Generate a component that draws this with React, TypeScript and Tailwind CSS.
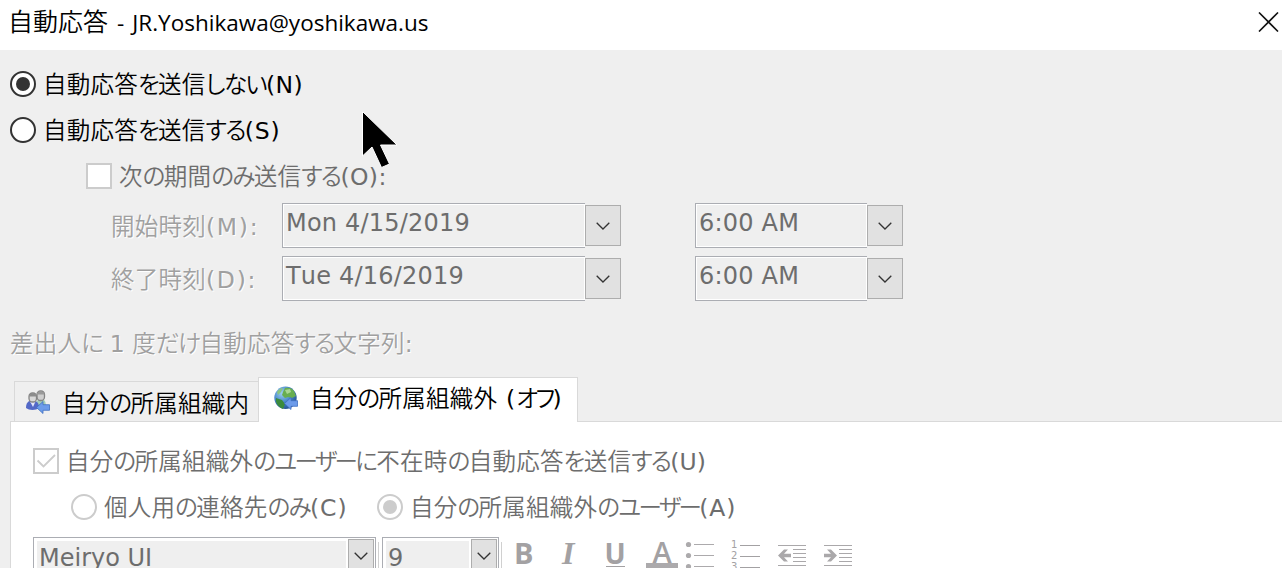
import type { ReactNode } from "react";
import clsx from "clsx";

const uiFont =
  "font-['DejaVu_Sans','Noto_Sans_CJK_JP',sans-serif] [font-feature-settings:'palt'] whitespace-nowrap";

// 文字種ごとに字間と太さを変える
function splitScripts(text: string) {
  return text.match(/[\x20-\x7e]+|[ぁ-ゟ]+|[゠-ヿ]+|[一-鿿]+/g) ?? [];
}

function Label({
  children,
  className,
  latin = "tracking-[0.4px]",
}: {
  children: string;
  className?: string;
  latin?: string;
}) {
  return (
    <span className={clsx("relative top-px inline-block text-[23.5px] leading-8", className)}>
      {splitScripts(children).map((part, i) => (
        <span
          key={i}
          className={clsx(
            /^[\x20-\x7e]/.test(part) && latin,
            /^[ぁ-ゟ]/.test(part) && "font-[350] tracking-[-1.6px]",
            /^[゠-ヿ]/.test(part) && "font-[350] tracking-[-2.6px]",
            /^[一-鿿]/.test(part) && "font-[350] tracking-[0.25px]"
          )}
        >
          {part}
        </span>
      ))}
    </span>
  );
}

function Radio({ checked, disabled }: { checked?: boolean; disabled?: boolean }) {
  return (
    <span
      className={clsx(
        "flex size-[26px] shrink-0 items-center justify-center rounded-full border-2 bg-white",
        disabled ? "border-[#cccccc]" : "border-[#333333]"
      )}
    >
      {checked && (
        <span
          className={clsx("size-3.5 rounded-full", disabled ? "bg-[#cccccc]" : "bg-[#333333]")}
        />
      )}
    </span>
  );
}

function Checkbox({ checked }: { checked?: boolean }) {
  return (
    <span className="flex size-[26px] shrink-0 items-center justify-center border-2 border-[#cccccc] bg-white">
      {checked && (
        <svg width="22" height="22" viewBox="0 0 22 22" fill="none" stroke="#cccccc" strokeWidth="1.8">
          <path d="M2.500 10.500 8.500 16.500 20 5" />
        </svg>
      )}
    </span>
  );
}

function Chevron() {
  return (
    <svg width="14" height="8" viewBox="0 0 14 8" fill="none" stroke="#333333" strokeWidth="1.3">
      <path d="M.7.7 7 7 13.3.7" />
    </svg>
  );
}

function Picker({ value, className }: { value: ReactNode; className: string }) {
  return (
    <div className="flex items-center">
      <div
        className={clsx(
          "h-[45px] border border-r-0 border-[#abadb3] bg-[#efefef] pl-[3px] text-2xl leading-[39px] tracking-[0.2px] text-[#6d6d6d] shadow-[inset_0_0_0_1px_#fff] [font-kerning:none]",
          className
        )}
      >
        {value}
      </div>
      <div className="flex h-[41px] w-9 items-center justify-center border border-[#adadad] bg-[#e1e1e1]">
        <Chevron />
      </div>
    </div>
  );
}

function Select({ value, className }: { value: string; className: string }) {
  return (
    <div className={clsx("flex h-[50px] border border-[#abadb3] bg-white p-px", className)}>
      <div className="m-0.5 flex-1 bg-[#efefef] pl-0.5 text-2xl leading-[35px] text-[#6d6d6d]">
        {value}
      </div>
      <div className="flex w-[26px] justify-center border border-[#adadad] bg-[#e1e1e1] pt-3">
        <Chevron />
      </div>
    </div>
  );
}

function BlueArrow() {
  return (
    <path
      d="M10.500 17.500 17 11.500v3.200h6.500v5.600H17v3.200Z"
      fill="#6c9bea"
      stroke="#3f6fc0"
      strokeWidth=".8"
    />
  );
}

function PeopleIcon() {
  return (
    <svg width="24" height="24" viewBox="0 0 24 24">
      <path d="M10 18c0-6 1-9 5-9s5 3 5 9Z" fill="#a3cdb8" />
      <rect x="11" y="1" width="7.500" height="9.500" rx="3.500" fill="#cfcfcf" stroke="#858585" strokeWidth="1.3" />
      <path d="M11 4.500c0-4.500 7.500-4.500 7.500 0Z" fill="#9a9a9a" />
      <path d="M0 18c0-5 2-7.500 6.500-7.500S13 13 13 18c-3 2.500-10 2.500-13 0Z" fill="#5369c7" />
      <path d="m4 11.500 3 5.500 2.500-5.500Z" fill="#e4e6fa" />
      <rect x="3" y="3" width="7.500" height="9" rx="3.500" fill="#d8d8d8" stroke="#858585" strokeWidth="1.3" />
      <path d="M3 6.500c0-4.500 7.500-4.500 7.500 0Z" fill="#8c8c8c" />
      <BlueArrow />
    </svg>
  );
}

function GlobeIcon() {
  return (
    <svg width="26" height="25" viewBox="0 0 26 25">
      <defs>
        <radialGradient id="sea" cx=".35" cy=".3" r=".75">
          <stop offset="0" stopColor="#9fd0f2" />
          <stop offset=".55" stopColor="#4585c8" />
          <stop offset="1" stopColor="#24508f" />
        </radialGradient>
      </defs>
      <circle cx="11.500" cy="11.800" r="11.200" fill="url(#sea)" />
      <path d="M11 2c4-1 7 0 9 3l2 5-4 2-4-1-3 1-3-3 1-3Z" fill="#68ae50" />
      <path d="M3 6c2-3 4-4 6-4L7 6 4 9Z" fill="#8cc57c" />
      <path d="m2 12 6 2 3 4-2 5C5 21 1 18 2 12Z" fill="#3c8b3d" />
      <path d="m11 4 5-1 1 3-4 2Z" fill="#a9d792" />
      <BlueArrow />
    </svg>
  );
}

function BulletList() {
  return (
    <svg width="30" height="30" viewBox="0 0 30 30" fill="#acaaac">
      {[4, 15, 26].map((y) => (
        <g key={y}>
          <circle cx="3.500" cy={y + 0.5} r="2.600" />
          <path d={`M9 ${y}h20v1H9Z`} />
        </g>
      ))}
    </svg>
  );
}

function NumberList() {
  return (
    <svg width="30" height="30" viewBox="0 0 30 30" fill="#a3a1a3">
      {[1, 2, 3].map((n) => (
        <g key={n}>
          <text x="0" y={n * 11 - 3} fontSize="10" fontFamily="DejaVu Sans">
            {n}
          </text>
          <path d={`M9 ${n * 11 - 6}h20v1H9Z`} />
        </g>
      ))}
    </svg>
  );
}

function Indent({ right }: { right?: boolean }) {
  return (
    <svg width="28" height="22" viewBox="0 0 28 22" fill="#aaa8aa">
      <path d="M0 0h28v1H0ZM15 4h13v1H15ZM15 8h13v1H15ZM15 12h13v1H15ZM15 16h13v1H15ZM0 20h28v1H0Z" />
      <path
        d="M0 10.500 6 4.500h4l-4 4.200h7v3.600H6l4 4.200H6Z"
        transform={right ? "translate(13 0) scale(-1 1)" : undefined}
      />
    </svg>
  );
}

function Toolbar() {
  return (
    <div className="flex h-[31px] items-start overflow-hidden pl-[22px] text-[#a3a1a3]">
      <Select value="Meiryo UI" className="w-[343px]" />
      <span className="mt-[5px] ml-0.5 h-10 w-px bg-[#d0d0d0]" />
      <Select value="9" className="ml-[3px] w-[117px]" />
      <span className="mt-[5px] ml-0.5 h-10 w-px bg-[#d0d0d0]" />
      <span className="ml-3 w-[22px] font-['Open_Sans'] text-[29px] leading-[32px] font-bold">B</span>
      <span className="ml-[26px] w-[20px] font-['Liberation_Serif'] text-[32px] leading-[33px] font-bold italic">I</span>
      <span className="ml-[22px] flex w-[22px] flex-col items-center">
        <span className="h-[29px] font-['Open_Sans'] text-[28px] leading-[32px] font-bold">U</span>
        <span className="h-px w-[19px] bg-[#a3a1a3]" />
      </span>
      <span className="ml-5 flex w-8 flex-col items-center">
        <span className="h-[26px] font-['Open_Sans'] text-[29px] leading-[30px] font-semibold">A</span>
        <span className="h-[5px] w-8 bg-[#acaaac]" />
      </span>
      <span className="ml-[7px] pt-[3px]"><BulletList /></span>
      <span className="ml-4 pt-[3px]"><NumberList /></span>
      <span className="ml-[17px] pt-2"><Indent /></span>
      <span className="ml-[18px] pt-2"><Indent right /></span>
    </div>
  );
}

function Cursor() {
  return (
    <svg className="absolute top-[110px] left-[361px]" width="38" height="60" viewBox="0 0 38 60">
      <path
        d="M1.500 1.500V46L11 37l9.500 20.500 8-3.500-9-19H36Z"
        fill="#000"
        stroke="#fff"
        strokeWidth="1"
      />
    </svg>
  );
}

export default function App() {
  return (
    <div className={clsx("relative flex h-[568px] w-[1282px] flex-col overflow-hidden bg-[#efefef] text-black", uiFont)}>
      <header className="flex h-[50px] items-center justify-between bg-white pr-[3px] pb-1.5 pl-2">
        <h1 className="flex items-baseline font-['Open_Sans','Noto_Sans_CJK_JP',sans-serif] leading-8 font-normal">
          <span className="text-[25px] font-[350]">自動応答</span>
          <span className="ml-[9px] text-[22.5px]">-</span>
          <span className="ml-[8px] text-[22.5px]">JR.Yoshikawa@yoshikawa.us</span>
        </h1>
        <svg width="21" height="20" viewBox="0 0 21 20" fill="none" stroke="#111" strokeWidth="1.6">
          <path d="m1 .5 19 19M20 .5l-19 19" />
        </svg>
      </header>

      <section className="flex flex-col pt-[11px]">
        <div className="flex h-[46px] items-center gap-[7px] pl-2.5">
          <Radio checked />
          <Label>自動応答を送信しない(N)</Label>
        </div>
        <div className="flex h-[46px] items-center gap-[7px] pl-2.5">
          <Radio />
          <Label latin="tracking-[0.9px]">自動応答を送信する(S)</Label>
        </div>
        <div className="flex h-[46px] items-center gap-[7px] pl-[86px] text-[#6d6d6d]">
          <Checkbox />
          <Label>次の期間のみ送信する(O):</Label>
        </div>

        <div className="mt-1 flex flex-col gap-2 pl-[111px]">
          {[
            ["開始時刻(M):", "Mon 4/15/2019"],
            ["終了時刻(D):", "Tue 4/16/2019"],
          ].map(([label, date]) => (
            <div key={label} className="flex h-[45px] items-center">
              <Label
                className="w-[171px] text-[#a0a0a0] [text-shadow:1px_1px_#fff]"
                latin="tracking-[1.7px]"
              >
                {label}
              </Label>
              <Picker value={date} className="w-[303px]" />
              <div className="w-[74px]" />
              <Picker value="6:00 AM" className="w-[172px]" />
            </div>
          ))}
        </div>

        <div className="mt-[26px] pl-2.5">
          <Label className="text-[#a0a0a0] [text-shadow:1px_1px_#fff]" latin="">
            差出人に 1 度だけ自動応答する文字列:
          </Label>
        </div>
      </section>

      {/* タブ */}
      <div className="mt-auto flex h-11 items-end pl-3.5">
        <div className="flex h-10 w-[244px] items-center border border-r-0 border-b-0 border-[#d9d9d9] pl-[11px]">
          <PeopleIcon />
          <Label className="ml-3 pt-0.5">自分の所属組織内</Label>
        </div>
        <div className="z-10 -mb-px flex h-[45px] w-[320px] items-center border border-b-0 border-[#d9d9d9] bg-white pb-1 pl-[15px]">
          <GlobeIcon />
          <Label className="ml-2.5" latin="tracking-[1.2px]">自分の所属組織外 (オフ)</Label>
        </div>
      </div>

      <section className="ml-2.5 h-[147px] shrink-0 border-t border-l border-[#d9d9d9] bg-white text-[#6d6d6d]">
        <div className="flex h-[46px] items-center gap-[7px] pt-8 pl-[22px]">
          <Checkbox checked />
          <Label latin="">自分の所属組織外のユーザーに不在時の自動応答を送信する(U)</Label>
        </div>
        <div className="mt-4 flex h-[46px] items-center pl-[60px]">
          <Radio disabled />
          <Label className="ml-[7px] w-[273px]" latin="tracking-[0.9px]">個人用の連絡先のみ(C)</Label>
          <Radio checked disabled />
          <Label className="ml-[7px]" latin="tracking-[0.9px]">自分の所属組織外のユーザー(A)</Label>
        </div>
        <div className="mt-[7px]">
          <Toolbar />
        </div>
      </section>

      <Cursor />
    </div>
  );
}
